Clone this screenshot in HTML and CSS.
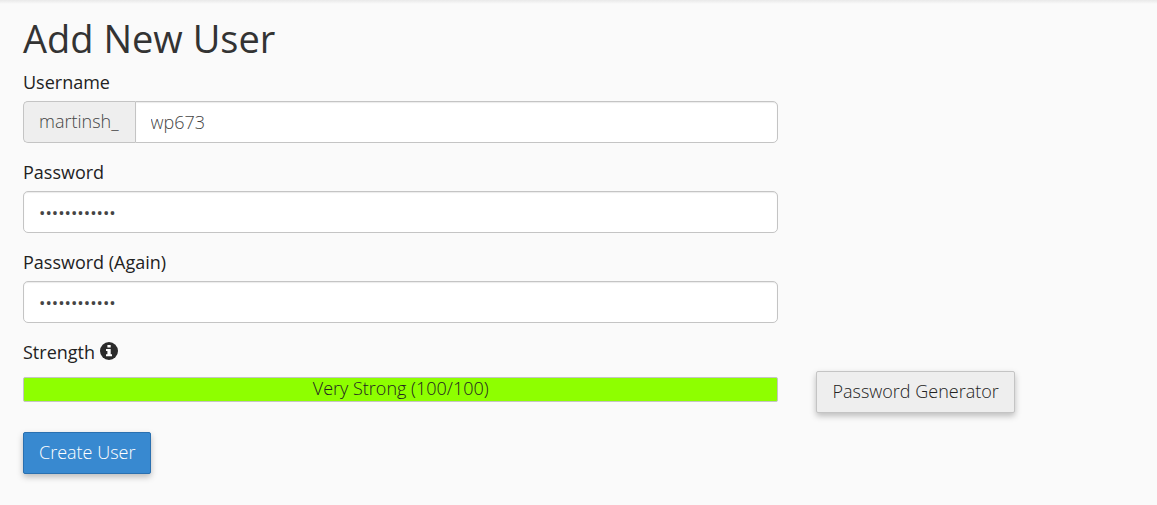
FILE: index.html
```html
<!DOCTYPE html>
<html lang="en">
<head>
<meta charset="utf-8">
<meta name="viewport" content="width=device-width, initial-scale=1">
<title>Add New User</title>
<link rel="stylesheet" href="styles.css">
</head>
<body>
<main class="page">
  <h1 class="title">Add New User</h1>
  <form class="form">
    <div class="field">
      <label class="label" for="username">Username</label>
      <div class="input-group">
        <span class="addon">martinsh_</span>
        <input class="input" id="username" type="text" value="wp673">
      </div>
    </div>
    <div class="field">
      <label class="label" for="password">Password</label>
      <input class="input password" id="password" type="password" value="abcdefghijkl">
    </div>
    <div class="field">
      <label class="label" for="password-again">Password (Again)</label>
      <input class="input password" id="password-again" type="password" value="abcdefghijkl">
    </div>
    <div class="strength">
      <div class="label strength-label">
        <span>Strength</span>
        <svg class="info" viewBox="0 0 18 18" role="img" aria-label="Information">
          <circle cx="9" cy="9" r="9" fill="#2b2b2b"/>
          <path d="M7.4 3h3.3v2.4H7.4zM6 7h4.7v5.3H12v2H6v-2h1.4V9H6z" fill="#fff"/>
        </svg>
      </div>
      <div class="meter">Very Strong (100/100)</div>
      <button class="button" type="button">Password Generator</button>
    </div>
    <button class="button primary" type="submit">Create User</button>
  </form>
</main>
</body>
</html>
```
FILE: styles.css
```css
* {
  box-sizing: border-box;
}

body {
  margin: 0;
  background: #fafafa;
  color: #222;
  font-family: "Open Sans", sans-serif;
  font-size: 18px;
  font-weight: 300;
  line-height: 26px;
}

.page {
  min-height: 100vh;
  padding: 15px 23px 30px;
  background: linear-gradient(#e9e9e9, #fafafa 4px);
}

.title {
  margin: 0 0 7px;
  color: #333;
  font-size: 38px;
  font-weight: 400;
  line-height: 46px;
}

.form {
  display: flex;
  flex-direction: column;
  align-items: flex-start;
}

.field {
  width: 68%;
  margin-bottom: 15px;
}

.label {
  display: block;
  height: 33px;
  padding-top: 1px;
  font-weight: 400;
}

.input-group {
  display: flex;
}

.input {
  display: block;
  width: 100%;
  height: 42px;
  padding: 0 15px;
  border: 1px solid #c4c4c4;
  border-radius: 5px;
  background: #fff;
  box-shadow: inset 0 1px 1px rgba(0, 0, 0, 0.08);
  color: #444;
  font: inherit;
}

.password {
  font-size: 17px;
  font-weight: 400;
}

.addon {
  padding: 6px 16px 8px 15px;
  border: 1px solid #c4c4c4;
  border-right: 0;
  border-radius: 5px 0 0 5px;
  background: #eee;
  color: #444;
}

.input-group .input {
  flex: 1;
  width: auto;
  min-width: 0;
  border-radius: 0 5px 5px 0;
}

.strength {
  display: grid;
  grid-template-columns: 68% 1fr;
  column-gap: 38px;
  align-items: start;
  justify-items: start;
  width: 100%;
  margin-bottom: 19px;
}

.strength-label {
  display: flex;
  grid-column: 1 / -1;
  gap: 5px;
  height: 33px;
}

.info {
  width: 18px;
  height: 18px;
  margin-top: 3px;
}

.meter {
  width: 100%;
  height: 25px;
  margin-top: 6px;
  border: 1px solid #c4c4c4;
  border-radius: 2px;
  background: #8eff00;
  line-height: 20px;
  text-align: center;
}

.button {
  height: 42px;
  padding: 0 15px 2px;
  border: 1px solid #c4c4c4;
  border-radius: 2px;
  background: #eee;
  box-shadow: 0 3px 6px rgba(0, 0, 0, 0.25);
  color: #222;
  font: inherit;
}

.primary {
  border-color: #2a70b0;
  background: #3889d0;
  color: #fff;
}
```
